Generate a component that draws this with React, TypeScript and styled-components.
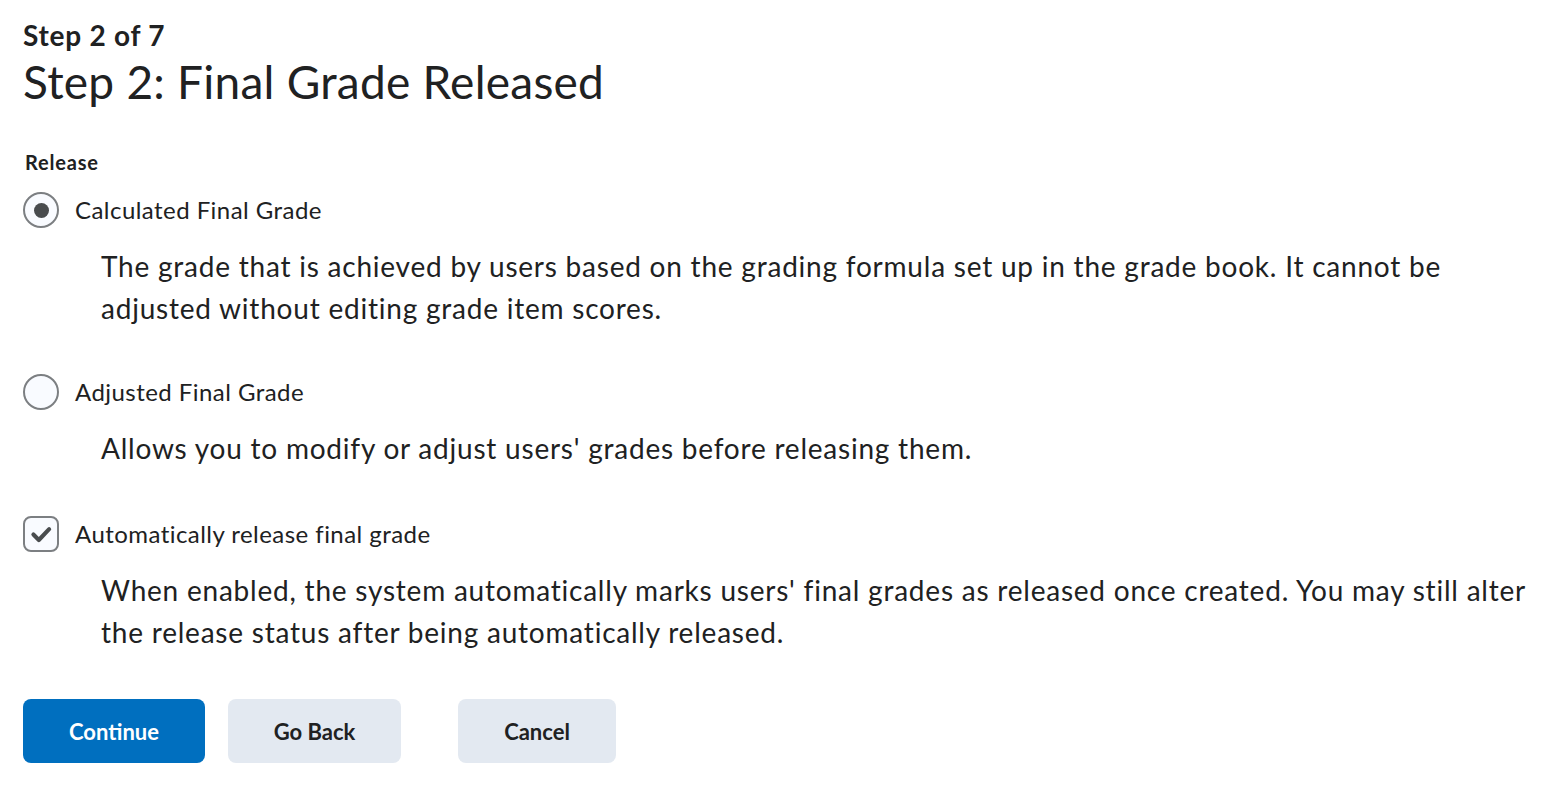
import React from "react";
import styled, { createGlobalStyle } from "styled-components";

const GlobalStyle = createGlobalStyle`
  html, body { margin: 0; padding: 0; background: #ffffff; }
  body { font-family: Lato, "Noto Sans", sans-serif; color: #202122; }
  * { box-sizing: border-box; }
`;

const Page = styled.div`
  padding: 18px 12px 24px 23px;
  display: flex;
  flex-direction: column;
`;

const StepCount = styled.div`
  font-size: 28px;
  font-weight: 700;
  line-height: 34px;
  letter-spacing: 0.75px;
`;

const Title = styled.h1`
  margin: 0;
  font-size: 46px;
  font-weight: 400;
  line-height: 60px;
  letter-spacing: 0.25px;
`;

const Fieldset = styled.div`
  margin-top: 36px;
  display: flex;
  flex-direction: column;
`;

const Legend = styled.div`
  font-size: 20px;
  font-weight: 700;
  line-height: 28px;
  letter-spacing: 0.8px;
  padding-left: 2px;
`;

const OptionRow = styled.label<{ $top: number }>`
  display: flex;
  align-items: center;
  gap: 16px;
  margin-top: ${(p) => p.$top}px;
  font-size: 24px;
  line-height: 36px;
  letter-spacing: 0.45px;
`;

const Radio = styled.span<{ $checked?: boolean }>`
  width: 36px;
  height: 36px;
  border-radius: 50%;
  border: 2px solid #7c7f82;
  background: #f9fbff;
  display: flex;
  align-items: center;
  justify-content: center;
  flex-shrink: 0;
  &::after {
    content: "";
    width: 15px;
    height: 15px;
    border-radius: 50%;
    background: #494c4e;
    display: ${(p) => (p.$checked ? "block" : "none")};
  }
`;

const Checkbox = styled.span`
  width: 36px;
  height: 36px;
  border-radius: 8px;
  border: 2px solid #7c7f82;
  background: #f9fbff;
  display: flex;
  align-items: center;
  justify-content: center;
  flex-shrink: 0;
`;

const Description = styled.p`
  margin: 17px 0 0 78px;
  font-size: 28px;
  line-height: 42px;
  letter-spacing: 0.78px;
`;

const Buttons = styled.div`
  display: flex;
  margin-top: 46px;
`;

const Button = styled.button<{ $primary?: boolean; $width: number; $gap: number }>`
  width: ${(p) => p.$width}px;
  height: 64px;
  margin-right: ${(p) => p.$gap}px;
  border: none;
  border-radius: 8px;
  font-family: Lato, "Noto Sans", sans-serif;
  font-size: 22px;
  font-weight: 700;
  background: ${(p) => (p.$primary ? "#006fbf" : "#e3e9f1")};
  color: ${(p) => (p.$primary ? "#ffffff" : "#202122")};
`;

export default function App() {
  return (
    <>
      <GlobalStyle />
      <Page>
        <StepCount>Step 2 of 7</StepCount>
        <Title>Step 2: Final Grade Released</Title>
        <Fieldset>
          <Legend>Release</Legend>
          <OptionRow $top={16}>
            <Radio $checked />
            Calculated Final Grade
          </OptionRow>
          <Description>
            The grade that is achieved by users based on the grading formula set up in the grade book. It cannot be adjusted without editing grade item scores.
          </Description>
          <OptionRow $top={45}>
            <Radio />
            Adjusted Final Grade
          </OptionRow>
          <Description>Allows you to modify or adjust users' grades before releasing them.</Description>
          <OptionRow $top={47}>
            <Checkbox>
              <svg width="26" height="26" viewBox="0 0 24 24">
                <path d="M5 12.5 L10 17.5 L19.5 7.5" fill="none" stroke="#494c4e" strokeWidth="3.8" strokeLinecap="round" strokeLinejoin="round" />
              </svg>
            </Checkbox>
            Automatically release final grade
          </OptionRow>
          <Description>
            When enabled, the system automatically marks users' final grades as released once created. You may still alter the release status after being automatically released.
          </Description>
        </Fieldset>
        <Buttons>
          <Button $primary $width={182} $gap={23}>Continue</Button>
          <Button $width={173} $gap={57}>Go Back</Button>
          <Button $width={158} $gap={0}>Cancel</Button>
        </Buttons>
      </Page>
    </>
  );
}
